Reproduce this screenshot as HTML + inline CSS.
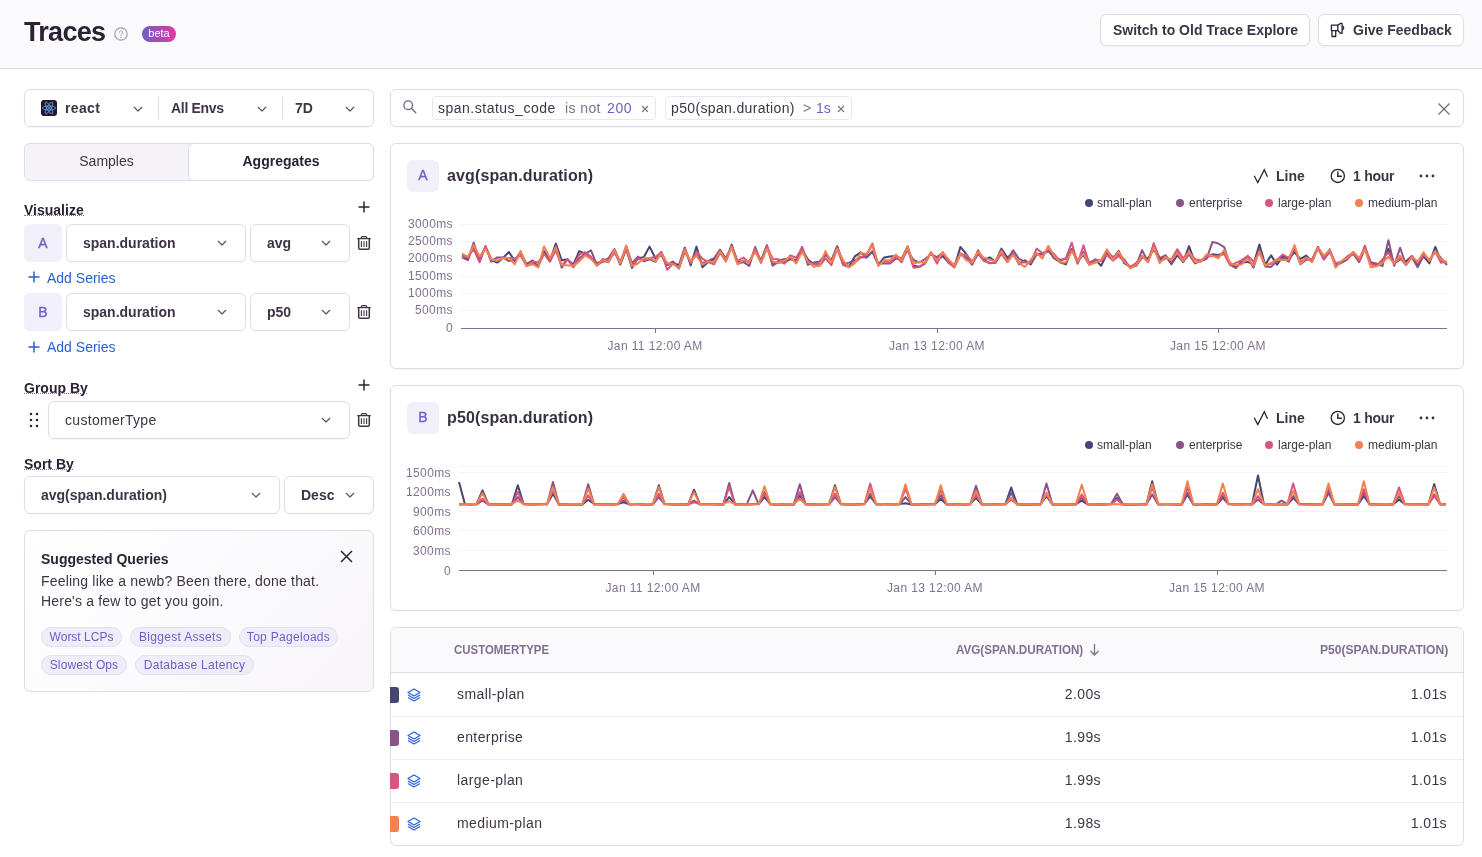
<!DOCTYPE html>
<html><head><meta charset="utf-8">
<style>
*{box-sizing:border-box;margin:0;padding:0}
html,body{width:1482px;height:857px;overflow:hidden;background:#fff;will-change:transform;font-family:"Liberation Sans",sans-serif;color:#3e3446}
.a{position:absolute}
.hdr{left:0;top:0;width:1482px;height:69px;background:#faf9fb;border-bottom:1px solid #e0dce5}
.box{position:absolute;background:#fff;border:1px solid #e0dce5;border-radius:6px;box-shadow:0 1px 2px rgba(43,34,51,0.04)}
.t{position:absolute;white-space:nowrap;line-height:1}
.b{font-weight:bold}
.chev{position:absolute;width:10px;height:6px}
.lbl{font-size:14px;font-weight:bold;color:#2b2233;}
.ul{position:absolute;height:1px;border-top:1px dotted #80708f}
.badge{position:absolute;background:#f1eff9;border-radius:6px;color:#6c5fc7;font-size:14px;text-align:center;-webkit-text-stroke:0.35px #6c5fc7}
.link{color:#2562d4;font-size:14px}
.chip{position:absolute;height:20px;border:1px solid #e4e0f2;background:#efedf8;border-radius:10px;color:#6c5fc7;font-size:12px;line-height:18px;padding:0;text-align:center;white-space:nowrap;letter-spacing:0.3px}
.ylab{position:absolute;font-size:12px;color:#80708f;text-align:right;width:60px;line-height:12px;letter-spacing:0.4px}
.xlab{position:absolute;font-size:12px;color:#80708f;text-align:center;width:120px;line-height:12px;letter-spacing:0.4px}
.leg{position:absolute;font-size:12px;color:#3e3446;line-height:12px;white-space:nowrap}
.dot{position:absolute;width:8px;height:8px;border-radius:4px}
.th{position:absolute;font-size:12px;font-weight:bold;color:#80708f;line-height:12px;white-space:nowrap}
.td{position:absolute;font-size:14px;color:#3e3446;line-height:14px;white-space:nowrap;letter-spacing:0.4px}
</style></head><body>
<div class="a hdr"></div>
<div class="t b" style="left:24px;top:19px;font-size:27px;color:#2b2233;letter-spacing:-0.7px">Traces</div>
<svg class="a" style="left:114px;top:27px" width="14" height="14" viewBox="0 0 14 14"><circle cx="7" cy="7" r="6.2" fill="none" stroke="#a399ad" stroke-width="1.2"/><path d="M5.2 5.5a1.8 1.8 0 1 1 2.6 1.6c-.5.3-.8.6-.8 1.2v.3" fill="none" stroke="#b0a6ba" stroke-width="1" stroke-linecap="round"/><circle cx="7" cy="10.3" r=".7" fill="#a399ad"/></svg>
<div class="a" style="left:142px;top:26px;width:34px;height:16px;border-radius:8px;background:linear-gradient(90deg,#6c5fc7,#e1399f);color:#fff;font-size:11px;line-height:14px;text-align:center">beta</div>

<div class="box" style="left:1100px;top:14px;width:210px;height:32px"></div>
<div class="t b" style="left:1113px;top:23px;font-size:14px;color:#3e3446">Switch to Old Trace Explore</div>
<div class="box" style="left:1318px;top:14px;width:146px;height:32px"></div>
<svg class="a" style="left:1330px;top:22px" width="16" height="16" viewBox="0 0 16 16"><g fill="none" stroke="#2b2233" stroke-width="1.3" stroke-linejoin="round"><path d="M1.4 3.2H7.8V8.6H1.4Z"/><path d="M7.8 3.2L10.6 1.4H12.1V11.3H10.6L7.8 8.6"/><path d="M12.1 3.8A2.1 2.1 0 0 1 12.1 7.9"/><path d="M2 8.6V14.5H5.7V8.6"/></g></svg>
<div class="t b" style="left:1353px;top:23px;font-size:14px;color:#3e3446">Give Feedback</div>

<!-- page filters -->
<div class="box" style="left:24px;top:89px;width:350px;height:38px"></div>
<div class="a" style="left:158px;top:97px;width:1px;height:22px;background:#e0dce5"></div>
<div class="a" style="left:282px;top:97px;width:1px;height:22px;background:#e0dce5"></div>
<div class="a" style="left:41px;top:100px;width:16px;height:16px;border-radius:3px;background:#1e1a2c"></div>
<svg class="a" style="left:41px;top:100px" width="16" height="16" viewBox="0 0 16 16"><g fill="none" stroke="#6fa8ee" stroke-width="0.8"><ellipse cx="8" cy="8" rx="6.7" ry="2.1"/><ellipse cx="8" cy="8" rx="6.7" ry="2.1" transform="rotate(60 8 8)"/><ellipse cx="8" cy="8" rx="6.7" ry="2.1" transform="rotate(120 8 8)"/></g><circle cx="8" cy="8" r="1" fill="#61a5f5"/></svg>
<div class="t b" style="left:65px;top:101px;font-size:14px;letter-spacing:0.35px">react</div>
<div class="t b" style="left:171px;top:101px;font-size:14px;letter-spacing:-0.3px">All Envs</div>
<div class="t b" style="left:295px;top:101px;font-size:14px">7D</div>
<svg class="a" style="left:133px;top:106px" width="10" height="6" viewBox="0 0 10 6"><path d="M1.2 1.3L5 5L8.8 1.3" fill="none" stroke="#5d5366" stroke-width="1.2" stroke-linecap="round" stroke-linejoin="round"/></svg><svg class="a" style="left:257px;top:106px" width="10" height="6" viewBox="0 0 10 6"><path d="M1.2 1.3L5 5L8.8 1.3" fill="none" stroke="#5d5366" stroke-width="1.2" stroke-linecap="round" stroke-linejoin="round"/></svg><svg class="a" style="left:345px;top:106px" width="10" height="6" viewBox="0 0 10 6"><path d="M1.2 1.3L5 5L8.8 1.3" fill="none" stroke="#5d5366" stroke-width="1.2" stroke-linecap="round" stroke-linejoin="round"/></svg>

<!-- segmented -->
<div class="a" style="left:24px;top:143px;width:350px;height:38px;border:1px solid #e0dce5;border-radius:6px;background:#f5f3f7"></div>
<div class="a" style="left:188px;top:143px;width:186px;height:38px;border:1px solid #e0dce5;border-radius:6px;background:#fff"></div>
<div class="t" style="left:24px;top:154px;width:165px;text-align:center;font-size:14px;color:#3e3446">Samples</div>
<div class="t b" style="left:188px;top:154px;width:186px;text-align:center;font-size:14px;color:#2b2233">Aggregates</div>

<!-- visualize -->
<div class="t lbl" style="left:24px;top:203px">Visualize</div><div class="ul" style="left:24px;top:215px;width:60px"></div>
<svg class="a" style="left:358px;top:201px" width="12" height="12" viewBox="0 0 12 12"><path d="M6 0.5V11.5M0.5 6H11.5" stroke="#2b2233" stroke-width="1.5"/></svg>
<div class="badge" style="left:24px;top:224px;width:38px;height:38px;line-height:38px">A</div>
<div class="box" style="left:66px;top:224px;width:180px;height:38px"></div>
<div class="t b" style="left:83px;top:236px;font-size:14px">span.duration</div>
<svg class="a" style="left:217px;top:240px" width="10" height="6" viewBox="0 0 10 6"><path d="M1.2 1.3L5 5L8.8 1.3" fill="none" stroke="#5d5366" stroke-width="1.2" stroke-linecap="round" stroke-linejoin="round"/></svg>
<div class="box" style="left:250px;top:224px;width:100px;height:38px"></div>
<div class="t b" style="left:267px;top:236px;font-size:14px">avg</div>
<svg class="a" style="left:321px;top:240px" width="10" height="6" viewBox="0 0 10 6"><path d="M1.2 1.3L5 5L8.8 1.3" fill="none" stroke="#5d5366" stroke-width="1.2" stroke-linecap="round" stroke-linejoin="round"/></svg>
<svg class="a" style="left:357px;top:236px" width="14" height="14" viewBox="0 0 14 14"><g fill="none" stroke="#3e3446" stroke-linejoin="round"><path d="M0.3 2.6H13.7" stroke-width="1.3"/><path d="M4.4 2.5V1.6Q4.4 0.7 5.3 0.7H8.7Q9.6 0.7 9.6 1.6V2.5" stroke-width="1.2"/><path d="M1.7 2.6V12.2Q1.9 13.2 2.9 13.2H11.1Q12.1 13.2 12.3 12.2V2.6" stroke-width="1.5"/><path d="M4.4 5.2V11M7 5.2V11M9.6 5.2V11" stroke-width="1.1"/></g></svg>
<svg class="a" style="left:28px;top:271px" width="12" height="12" viewBox="0 0 12 12"><path d="M6 0.5V11.5M0.5 6H11.5" stroke="#2562d4" stroke-width="1.5"/></svg>
<div class="t link" style="left:47px;top:271px">Add Series</div>

<div class="badge" style="left:24px;top:293px;width:38px;height:38px;line-height:38px">B</div>
<div class="box" style="left:66px;top:293px;width:180px;height:38px"></div>
<div class="t b" style="left:83px;top:305px;font-size:14px">span.duration</div>
<svg class="a" style="left:217px;top:309px" width="10" height="6" viewBox="0 0 10 6"><path d="M1.2 1.3L5 5L8.8 1.3" fill="none" stroke="#5d5366" stroke-width="1.2" stroke-linecap="round" stroke-linejoin="round"/></svg>
<div class="box" style="left:250px;top:293px;width:100px;height:38px"></div>
<div class="t b" style="left:267px;top:305px;font-size:14px">p50</div>
<svg class="a" style="left:321px;top:309px" width="10" height="6" viewBox="0 0 10 6"><path d="M1.2 1.3L5 5L8.8 1.3" fill="none" stroke="#5d5366" stroke-width="1.2" stroke-linecap="round" stroke-linejoin="round"/></svg>
<svg class="a" style="left:357px;top:305px" width="14" height="14" viewBox="0 0 14 14"><g fill="none" stroke="#3e3446" stroke-linejoin="round"><path d="M0.3 2.6H13.7" stroke-width="1.3"/><path d="M4.4 2.5V1.6Q4.4 0.7 5.3 0.7H8.7Q9.6 0.7 9.6 1.6V2.5" stroke-width="1.2"/><path d="M1.7 2.6V12.2Q1.9 13.2 2.9 13.2H11.1Q12.1 13.2 12.3 12.2V2.6" stroke-width="1.5"/><path d="M4.4 5.2V11M7 5.2V11M9.6 5.2V11" stroke-width="1.1"/></g></svg>
<svg class="a" style="left:28px;top:341px" width="12" height="12" viewBox="0 0 12 12"><path d="M6 0.5V11.5M0.5 6H11.5" stroke="#2562d4" stroke-width="1.5"/></svg>
<div class="t link" style="left:47px;top:340px">Add Series</div>

<!-- group by -->
<div class="t lbl" style="left:24px;top:381px">Group By</div><div class="ul" style="left:24px;top:393px;width:63px"></div>
<svg class="a" style="left:358px;top:379px" width="12" height="12" viewBox="0 0 12 12"><path d="M6 0.5V11.5M0.5 6H11.5" stroke="#2b2233" stroke-width="1.5"/></svg>
<svg class="a" style="left:29px;top:412px" width="10" height="16" viewBox="0 0 10 16"><g fill="#2b2233"><circle cx="2" cy="2" r="1.3"/><circle cx="8" cy="2" r="1.3"/><circle cx="2" cy="8" r="1.3"/><circle cx="8" cy="8" r="1.3"/><circle cx="2" cy="14" r="1.3"/><circle cx="8" cy="14" r="1.3"/></g></svg>
<div class="box" style="left:48px;top:401px;width:302px;height:38px"></div>
<div class="t" style="left:65px;top:413px;font-size:14px;letter-spacing:0.3px">customerType</div>
<svg class="a" style="left:321px;top:417px" width="10" height="6" viewBox="0 0 10 6"><path d="M1.2 1.3L5 5L8.8 1.3" fill="none" stroke="#5d5366" stroke-width="1.2" stroke-linecap="round" stroke-linejoin="round"/></svg>
<svg class="a" style="left:357px;top:413px" width="14" height="14" viewBox="0 0 14 14"><g fill="none" stroke="#3e3446" stroke-linejoin="round"><path d="M0.3 2.6H13.7" stroke-width="1.3"/><path d="M4.4 2.5V1.6Q4.4 0.7 5.3 0.7H8.7Q9.6 0.7 9.6 1.6V2.5" stroke-width="1.2"/><path d="M1.7 2.6V12.2Q1.9 13.2 2.9 13.2H11.1Q12.1 13.2 12.3 12.2V2.6" stroke-width="1.5"/><path d="M4.4 5.2V11M7 5.2V11M9.6 5.2V11" stroke-width="1.1"/></g></svg>

<!-- sort by -->
<div class="t lbl" style="left:24px;top:457px">Sort By</div><div class="ul" style="left:24px;top:469px;width:49px"></div>
<div class="box" style="left:24px;top:476px;width:256px;height:38px"></div>
<div class="t b" style="left:41px;top:488px;font-size:14px">avg(span.duration)</div>
<svg class="a" style="left:251px;top:492px" width="10" height="6" viewBox="0 0 10 6"><path d="M1.2 1.3L5 5L8.8 1.3" fill="none" stroke="#5d5366" stroke-width="1.2" stroke-linecap="round" stroke-linejoin="round"/></svg>
<div class="box" style="left:284px;top:476px;width:90px;height:38px"></div>
<div class="t b" style="left:301px;top:488px;font-size:14px">Desc</div>
<svg class="a" style="left:345px;top:492px" width="10" height="6" viewBox="0 0 10 6"><path d="M1.2 1.3L5 5L8.8 1.3" fill="none" stroke="#5d5366" stroke-width="1.2" stroke-linecap="round" stroke-linejoin="round"/></svg>

<!-- suggested -->
<div class="a" style="left:24px;top:530px;width:350px;height:162px;border:1px solid #e0dce5;border-radius:6px;background:linear-gradient(135deg,#fff 0%,#f7f5fa 100%)"></div>
<div class="t b" style="left:41px;top:552px;font-size:14px;color:#2b2233">Suggested Queries</div>
<svg class="a" style="left:340px;top:550px" width="13" height="13" viewBox="0 0 13 13"><path d="M1 1L12 12M12 1L1 12" stroke="#2b2233" stroke-width="1.5"/></svg>
<div class="t" style="left:41px;top:571px;font-size:14px;line-height:20px;color:#3e3446;letter-spacing:0.19px">Feeling like a newb? Been there, done that.<br>Here's a few to get you goin.</div>
<div class="chip" style="left:41px;top:627px;width:81px;letter-spacing:0">Worst LCPs</div>
<div class="chip" style="left:130px;top:627px;width:101px">Biggest Assets</div>
<div class="chip" style="left:239px;top:627px;width:99px">Top Pageloads</div>
<div class="chip" style="left:41px;top:655px;width:86px;letter-spacing:0.1px">Slowest Ops</div>
<div class="chip" style="left:135px;top:655px;width:119px">Database Latency</div>

<!-- search -->
<div class="box" style="left:390px;top:89px;width:1074px;height:38px"></div>
<svg class="a" style="left:403px;top:100px" width="14" height="14" viewBox="0 0 14 14"><circle cx="5.2" cy="5.2" r="4.3" fill="none" stroke="#71637f" stroke-width="1.3"/><path d="M8.3 8.3L12.8 12.8" stroke="#71637f" stroke-width="1.3" stroke-linecap="round"/></svg>
<div class="a" style="left:432px;top:96px;width:224px;height:24px;border:1px solid #eae6ee;border-radius:4px"></div>
<div class="t" style="left:438px;top:101px;font-size:14px;color:#3e3446;letter-spacing:0.5px">span.status_code</div>
<div class="t" style="left:565px;top:101px;font-size:14px;color:#80708f;letter-spacing:0.4px">is not</div>
<div class="t" style="left:607px;top:101px;font-size:14px;color:#6c5fc7;letter-spacing:0.6px">200</div>
<svg class="a" style="left:641px;top:105px" width="8" height="8" viewBox="0 0 8 8"><path d="M1 1L7 7M7 1L1 7" stroke="#80708f" stroke-width="1.2"/></svg>
<div class="a" style="left:665px;top:96px;width:187px;height:24px;border:1px solid #eae6ee;border-radius:4px"></div>
<div class="t" style="left:671px;top:101px;font-size:14px;color:#3e3446;letter-spacing:0.35px">p50(span.duration)</div>
<div class="t" style="left:803px;top:101px;font-size:14px;color:#80708f">&gt;</div>
<div class="t" style="left:816px;top:101px;font-size:14px;color:#6c5fc7">1s</div>
<svg class="a" style="left:837px;top:105px" width="8" height="8" viewBox="0 0 8 8"><path d="M1 1L7 7M7 1L1 7" stroke="#80708f" stroke-width="1.2"/></svg>
<svg class="a" style="left:1438px;top:103px" width="12" height="12" viewBox="0 0 12 12"><path d="M0.5 0.5L11.5 11.5M11.5 0.5L0.5 11.5" stroke="#71667d" stroke-width="1.2"/></svg>

<!-- chart A -->
<div class="box" style="left:390px;top:143px;width:1074px;height:226px"></div><div class="badge" style="left:407px;top:160px;width:32px;height:32px;line-height:30px;font-size:14px">A</div><div class="t b" style="left:447px;top:168px;font-size:16px;color:#3a3042;letter-spacing:0.12px">avg(span.duration)</div><svg class="a" style="left:1253px;top:168px" width="16" height="16" viewBox="0 0 16 16"><path d="M1.2 7.8L4.8 14.5L11.3 1.7L14.5 8.7" fill="none" stroke="#2b2233" stroke-width="1.3" stroke-linejoin="miter" stroke-linecap="butt"/></svg><div class="t b" style="left:1276px;top:169px;font-size:14px">Line</div><svg class="a" style="left:1330px;top:168px" width="16" height="16" viewBox="0 0 16 16"><circle cx="7.8" cy="7.9" r="6.6" fill="none" stroke="#2b2233" stroke-width="1.3"/><path d="M7.8 3.4v4.9h4" fill="none" stroke="#2b2233" stroke-width="1.4"/></svg><div class="t b" style="left:1353px;top:169px;font-size:14px;letter-spacing:-0.25px">1 hour</div><svg class="a" style="left:1419px;top:174px" width="16" height="4" viewBox="0 0 16 4"><circle cx="2" cy="2" r="1.4" fill="#3e3446"/><circle cx="8" cy="2" r="1.4" fill="#3e3446"/><circle cx="14" cy="2" r="1.4" fill="#3e3446"/></svg><div class="dot" style="left:1085px;top:199px;background:#444674"></div><div class="leg" style="left:1097px;top:197px">small-plan</div><div class="dot" style="left:1176px;top:199px;background:#895289"></div><div class="leg" style="left:1189px;top:197px">enterprise</div><div class="dot" style="left:1265px;top:199px;background:#d6567f"></div><div class="leg" style="left:1278px;top:197px">large-plan</div><div class="dot" style="left:1355px;top:199px;background:#f38150"></div><div class="leg" style="left:1368px;top:197px">medium-plan</div>
<svg class="a" style="left:0;top:0" width="1482" height="857">
<g stroke="#f5f3f7" stroke-width="1">
<line x1="461" x2="1447" y1="224.5" y2="224.5"/><line x1="461" x2="1447" y1="241.5" y2="241.5"/><line x1="461" x2="1447" y1="258.5" y2="258.5"/><line x1="461" x2="1447" y1="276.5" y2="276.5"/><line x1="461" x2="1447" y1="293.5" y2="293.5"/><line x1="461" x2="1447" y1="310.5" y2="310.5"/>
</g>
<line x1="461" x2="1447" y1="328.5" y2="328.5" stroke="#80708f" stroke-width="1"/>
<line x1="655.5" x2="655.5" y1="328" y2="333" stroke="#80708f"/><line x1="937.5" x2="937.5" y1="328" y2="333" stroke="#80708f"/><line x1="1218.5" x2="1218.5" y1="328" y2="333" stroke="#80708f"/>
<polyline points="462.0,255.7 467.9,258.9 473.7,246.1 479.6,258.1 485.5,247.3 491.3,260.0 497.2,262.6 503.0,257.9 508.9,252.0 514.8,260.9 520.6,252.4 526.5,264.2 532.4,260.5 538.2,266.8 544.1,251.3 549.9,260.6 555.8,243.5 561.7,260.3 567.5,259.5 573.4,264.5 579.3,251.1 585.1,253.6 591.0,258.1 596.9,263.3 602.7,261.0 608.6,262.0 614.4,250.7 620.3,264.7 626.2,248.9 632.0,267.9 637.9,258.3 643.8,257.2 649.6,246.6 655.5,258.5 661.3,254.9 667.2,265.1 673.1,262.9 678.9,265.2 684.8,247.6 690.7,265.4 696.5,246.6 702.4,267.2 708.2,262.1 714.1,259.1 720.0,252.1 725.8,261.3 731.7,244.6 737.6,262.3 743.4,261.0 749.3,261.3 755.2,251.3 761.0,260.3 766.9,245.7 772.7,264.6 778.6,262.6 784.5,262.3 790.3,259.1 796.2,261.1 802.1,249.7 807.9,259.5 813.8,264.2 819.6,264.2 825.5,254.4 831.4,261.3 837.2,246.7 843.1,262.7 849.0,266.4 854.8,256.4 860.7,252.4 866.6,257.5 872.4,251.5 878.3,264.9 884.1,257.5 890.0,256.4 895.9,256.1 901.7,258.9 907.6,246.4 913.5,265.7 919.3,266.8 925.2,263.3 931.0,252.5 936.9,260.4 942.8,256.0 948.6,262.5 954.5,266.5 960.4,246.9 966.2,253.9 972.1,263.8 978.0,253.9 983.8,259.8 989.7,257.3 995.5,261.7 1001.4,248.6 1007.3,257.6 1013.1,253.3 1019.0,264.1 1024.9,260.3 1030.7,264.5 1036.6,253.9 1042.4,254.2 1048.3,250.1 1054.2,258.3 1060.0,262.3 1065.9,264.4 1071.8,249.0 1077.6,260.4 1083.5,254.9 1089.4,264.7 1095.2,259.5 1101.1,265.7 1106.9,254.1 1112.8,258.7 1118.7,250.9 1124.5,263.5 1130.4,266.9 1136.3,265.7 1142.1,257.3 1148.0,258.4 1153.8,249.4 1159.7,259.6 1165.6,255.5 1171.4,264.2 1177.3,255.1 1183.2,262.1 1189.0,246.1 1194.9,262.4 1200.8,260.7 1206.6,257.3 1212.5,254.2 1218.3,255.1 1224.2,252.3 1230.1,262.9 1235.9,267.0 1241.8,262.4 1247.7,261.9 1253.5,264.4 1259.4,244.4 1265.2,264.7 1271.1,255.4 1277.0,264.8 1282.8,256.4 1288.7,258.7 1294.6,252.3 1300.4,258.9 1306.3,255.6 1312.1,261.7 1318.0,247.7 1323.9,259.2 1329.7,249.4 1335.6,265.9 1341.5,262.7 1347.3,259.4 1353.2,252.0 1359.1,261.1 1364.9,247.5 1370.8,263.6 1376.6,265.0 1382.5,262.0 1388.4,248.8 1394.2,263.7 1400.1,259.1 1406.0,261.4 1411.8,256.1 1417.7,265.7 1423.5,256.2 1429.4,263.4 1435.3,246.9 1441.1,261.4 1447.0,262.3" fill="none" stroke="#444674" stroke-width="2" stroke-linejoin="round"/>
<polyline points="462.0,257.4 467.9,260.1 473.7,242.6 479.6,260.9 485.5,246.2 491.3,261.8 497.2,257.4 503.0,257.4 508.9,261.1 514.8,260.1 520.6,252.0 526.5,265.4 532.4,264.1 538.2,265.0 544.1,253.4 549.9,261.7 555.8,246.3 561.7,267.8 567.5,259.0 573.4,267.3 579.3,258.2 585.1,253.9 591.0,250.3 596.9,265.1 602.7,261.7 608.6,258.2 614.4,249.0 620.3,262.5 626.2,245.8 632.0,263.4 637.9,256.6 643.8,261.3 649.6,259.4 655.5,261.7 661.3,251.8 667.2,264.6 673.1,261.5 678.9,268.7 684.8,251.8 690.7,261.2 696.5,255.1 702.4,263.2 708.2,260.9 714.1,258.2 720.0,249.5 725.8,258.5 731.7,247.4 737.6,263.7 743.4,262.1 749.3,265.9 755.2,246.9 761.0,262.7 766.9,245.2 772.7,265.8 778.6,260.9 784.5,258.9 790.3,258.2 796.2,260.6 802.1,246.9 807.9,264.9 813.8,262.4 819.6,261.5 825.5,254.6 831.4,260.1 837.2,246.1 843.1,264.4 849.0,262.6 854.8,260.4 860.7,257.0 866.6,257.2 872.4,251.3 878.3,263.7 884.1,263.3 890.0,263.4 895.9,258.6 901.7,259.1 907.6,250.4 913.5,260.0 919.3,262.5 925.2,259.0 931.0,254.1 936.9,257.1 942.8,252.8 948.6,260.9 954.5,265.4 960.4,253.3 966.2,257.5 972.1,264.8 978.0,250.3 983.8,259.8 989.7,263.3 995.5,262.5 1001.4,249.5 1007.3,260.1 1013.1,250.3 1019.0,258.8 1024.9,261.7 1030.7,263.3 1036.6,254.4 1042.4,254.5 1048.3,251.1 1054.2,257.4 1060.0,259.7 1065.9,259.0 1071.8,249.0 1077.6,263.1 1083.5,251.7 1089.4,262.8 1095.2,259.7 1101.1,260.7 1106.9,250.9 1112.8,257.2 1118.7,254.4 1124.5,259.8 1130.4,267.8 1136.3,265.0 1142.1,250.3 1148.0,261.9 1153.8,244.4 1159.7,258.1 1165.6,255.3 1171.4,263.5 1177.3,251.9 1183.2,262.0 1189.0,254.3 1194.9,263.4 1200.8,261.1 1206.6,258.9 1212.5,241.9 1218.3,243.5 1224.2,247.1 1230.1,264.7 1235.9,268.1 1241.8,260.7 1247.7,256.9 1253.5,267.7 1259.4,249.3 1265.2,266.4 1271.1,266.9 1277.0,261.1 1282.8,258.4 1288.7,261.7 1294.6,248.4 1300.4,264.1 1306.3,259.7 1312.1,259.4 1318.0,246.7 1323.9,259.3 1329.7,251.9 1335.6,264.6 1341.5,261.7 1347.3,258.4 1353.2,253.8 1359.1,262.2 1364.9,248.8 1370.8,262.1 1376.6,263.8 1382.5,266.1 1388.4,240.2 1394.2,265.9 1400.1,247.8 1406.0,265.0 1411.8,257.2 1417.7,267.2 1423.5,255.4 1429.4,260.3 1435.3,251.3 1441.1,258.2 1447.0,265.0" fill="none" stroke="#895289" stroke-width="2" stroke-linejoin="round"/>
<polyline points="462.0,256.8 467.9,256.5 473.7,249.2 479.6,262.3 485.5,246.3 491.3,259.1 497.2,261.0 503.0,257.4 508.9,257.9 514.8,258.5 520.6,255.6 526.5,265.9 532.4,261.4 538.2,262.4 544.1,253.7 549.9,261.5 555.8,250.6 561.7,265.4 567.5,259.5 573.4,266.0 579.3,254.7 585.1,252.2 591.0,256.9 596.9,265.7 602.7,259.0 608.6,261.0 614.4,252.9 620.3,262.0 626.2,249.0 632.0,265.9 637.9,258.9 643.8,260.3 649.6,258.0 655.5,257.1 661.3,252.4 667.2,269.7 673.1,263.6 678.9,267.5 684.8,248.6 690.7,263.3 696.5,251.7 702.4,258.7 708.2,262.1 714.1,264.2 720.0,252.9 725.8,258.3 731.7,246.1 737.6,261.0 743.4,257.5 749.3,263.1 755.2,248.4 761.0,261.9 766.9,246.4 772.7,258.9 778.6,259.2 784.5,263.6 790.3,255.4 796.2,257.7 802.1,247.9 807.9,263.1 813.8,263.9 819.6,265.8 825.5,258.3 831.4,265.2 837.2,248.6 843.1,265.0 849.0,267.1 854.8,262.4 860.7,257.4 866.6,254.9 872.4,243.5 878.3,265.2 884.1,260.7 890.0,262.6 895.9,256.5 901.7,262.2 907.6,248.2 913.5,267.8 919.3,267.1 925.2,262.5 931.0,252.2 936.9,263.6 942.8,252.1 948.6,263.0 954.5,267.4 960.4,254.5 966.2,254.7 972.1,261.6 978.0,252.7 983.8,261.0 989.7,262.8 995.5,263.0 1001.4,253.7 1007.3,262.3 1013.1,254.1 1019.0,262.2 1024.9,262.5 1030.7,262.6 1036.6,248.6 1042.4,253.3 1048.3,249.5 1054.2,254.1 1060.0,261.2 1065.9,258.1 1071.8,242.7 1077.6,263.8 1083.5,245.2 1089.4,264.5 1095.2,260.8 1101.1,261.0 1106.9,254.8 1112.8,260.6 1118.7,255.9 1124.5,262.0 1130.4,266.8 1136.3,262.7 1142.1,256.1 1148.0,262.3 1153.8,243.1 1159.7,262.0 1165.6,258.3 1171.4,259.4 1177.3,249.2 1183.2,258.3 1189.0,251.6 1194.9,259.3 1200.8,260.5 1206.6,256.7 1212.5,255.8 1218.3,255.9 1224.2,254.1 1230.1,265.3 1235.9,262.8 1241.8,260.2 1247.7,255.8 1253.5,261.6 1259.4,252.7 1265.2,265.5 1271.1,263.9 1277.0,259.8 1282.8,254.6 1288.7,257.8 1294.6,248.2 1300.4,262.3 1306.3,257.8 1312.1,259.7 1318.0,248.3 1323.9,259.4 1329.7,250.1 1335.6,263.3 1341.5,261.8 1347.3,256.4 1353.2,252.5 1359.1,260.5 1364.9,245.6 1370.8,264.2 1376.6,265.8 1382.5,259.3 1388.4,252.3 1394.2,264.0 1400.1,258.0 1406.0,265.0 1411.8,256.1 1417.7,262.1 1423.5,254.2 1429.4,260.3 1435.3,251.8 1441.1,262.7 1447.0,261.5" fill="none" stroke="#d6567f" stroke-width="2" stroke-linejoin="round"/>
<polyline points="462.0,253.5 467.9,257.1 473.7,245.1 479.6,256.5 485.5,248.9 491.3,259.4 497.2,260.6 503.0,258.1 508.9,257.9 514.8,264.4 520.6,251.0 526.5,266.0 532.4,264.0 538.2,267.4 544.1,246.3 549.9,258.1 555.8,247.4 561.7,265.0 567.5,265.3 573.4,266.1 579.3,261.3 585.1,255.2 591.0,258.9 596.9,265.6 602.7,260.1 608.6,262.3 614.4,249.8 620.3,263.6 626.2,245.7 632.0,266.0 637.9,263.6 643.8,258.3 649.6,257.9 655.5,261.1 661.3,253.7 667.2,263.0 673.1,264.3 678.9,268.3 684.8,250.0 690.7,261.4 696.5,255.5 702.4,264.6 708.2,261.3 714.1,262.6 720.0,251.1 725.8,261.6 731.7,247.2 737.6,264.3 743.4,260.3 749.3,261.6 755.2,251.7 761.0,263.1 766.9,248.6 772.7,261.6 778.6,262.9 784.5,260.3 790.3,256.8 796.2,263.5 802.1,251.7 807.9,261.1 813.8,266.9 819.6,265.5 825.5,251.1 831.4,262.5 837.2,248.5 843.1,260.3 849.0,267.4 854.8,263.1 860.7,252.9 866.6,254.0 872.4,245.4 878.3,266.1 884.1,260.3 890.0,260.3 895.9,254.7 901.7,260.2 907.6,246.4 913.5,263.8 919.3,261.8 925.2,262.8 931.0,252.6 936.9,260.5 942.8,252.4 948.6,259.4 954.5,265.8 960.4,253.5 966.2,260.2 972.1,262.8 978.0,251.8 983.8,257.8 989.7,259.9 995.5,261.1 1001.4,251.3 1007.3,261.8 1013.1,254.7 1019.0,263.2 1024.9,266.9 1030.7,259.8 1036.6,252.9 1042.4,258.5 1048.3,245.7 1054.2,256.0 1060.0,262.4 1065.9,262.4 1071.8,251.1 1077.6,260.8 1083.5,253.6 1089.4,264.7 1095.2,262.8 1101.1,260.0 1106.9,249.4 1112.8,259.6 1118.7,251.6 1124.5,261.7 1130.4,268.4 1136.3,265.0 1142.1,255.8 1148.0,261.9 1153.8,247.5 1159.7,263.1 1165.6,256.8 1171.4,260.1 1177.3,252.8 1183.2,261.3 1189.0,251.8 1194.9,261.9 1200.8,261.9 1206.6,254.4 1212.5,255.8 1218.3,258.2 1224.2,250.0 1230.1,263.2 1235.9,265.2 1241.8,264.3 1247.7,258.5 1253.5,265.6 1259.4,251.4 1265.2,265.4 1271.1,262.9 1277.0,259.4 1282.8,259.9 1288.7,259.7 1294.6,245.1 1300.4,264.4 1306.3,257.6 1312.1,262.2 1318.0,247.7 1323.9,255.7 1329.7,249.9 1335.6,267.6 1341.5,260.9 1347.3,258.4 1353.2,251.8 1359.1,258.0 1364.9,249.3 1370.8,267.2 1376.6,266.3 1382.5,262.6 1388.4,256.8 1394.2,263.6 1400.1,255.7 1406.0,264.8 1411.8,257.3 1417.7,261.8 1423.5,252.2 1429.4,261.0 1435.3,250.8 1441.1,259.5 1447.0,262.5" fill="none" stroke="#f38150" stroke-width="2" stroke-linejoin="round"/>
</svg>
<div class="ylab" style="left:393px;top:218px">3000ms</div>
<div class="ylab" style="left:393px;top:235px">2500ms</div>
<div class="ylab" style="left:393px;top:252px">2000ms</div>
<div class="ylab" style="left:393px;top:270px">1500ms</div>
<div class="ylab" style="left:393px;top:287px">1000ms</div>
<div class="ylab" style="left:393px;top:304px">500ms</div>
<div class="ylab" style="left:393px;top:322px">0</div>
<div class="xlab" style="left:595px;top:340px">Jan 11 12:00 AM</div>
<div class="xlab" style="left:877px;top:340px">Jan 13 12:00 AM</div>
<div class="xlab" style="left:1158px;top:340px">Jan 15 12:00 AM</div>

<!-- chart B -->
<div class="box" style="left:390px;top:385px;width:1074px;height:226px"></div><div class="badge" style="left:407px;top:402px;width:32px;height:32px;line-height:30px;font-size:14px">B</div><div class="t b" style="left:447px;top:410px;font-size:16px;color:#3a3042;letter-spacing:0.12px">p50(span.duration)</div><svg class="a" style="left:1253px;top:410px" width="16" height="16" viewBox="0 0 16 16"><path d="M1.2 7.8L4.8 14.5L11.3 1.7L14.5 8.7" fill="none" stroke="#2b2233" stroke-width="1.3" stroke-linejoin="miter" stroke-linecap="butt"/></svg><div class="t b" style="left:1276px;top:411px;font-size:14px">Line</div><svg class="a" style="left:1330px;top:410px" width="16" height="16" viewBox="0 0 16 16"><circle cx="7.8" cy="7.9" r="6.6" fill="none" stroke="#2b2233" stroke-width="1.3"/><path d="M7.8 3.4v4.9h4" fill="none" stroke="#2b2233" stroke-width="1.4"/></svg><div class="t b" style="left:1353px;top:411px;font-size:14px;letter-spacing:-0.25px">1 hour</div><svg class="a" style="left:1419px;top:416px" width="16" height="4" viewBox="0 0 16 4"><circle cx="2" cy="2" r="1.4" fill="#3e3446"/><circle cx="8" cy="2" r="1.4" fill="#3e3446"/><circle cx="14" cy="2" r="1.4" fill="#3e3446"/></svg><div class="dot" style="left:1085px;top:441px;background:#444674"></div><div class="leg" style="left:1097px;top:439px">small-plan</div><div class="dot" style="left:1176px;top:441px;background:#895289"></div><div class="leg" style="left:1189px;top:439px">enterprise</div><div class="dot" style="left:1265px;top:441px;background:#d6567f"></div><div class="leg" style="left:1278px;top:439px">large-plan</div><div class="dot" style="left:1355px;top:441px;background:#f38150"></div><div class="leg" style="left:1368px;top:439px">medium-plan</div>
<svg class="a" style="left:0;top:0" width="1482" height="857">
<g stroke="#f5f3f7" stroke-width="1">
<line x1="459" x2="1447" y1="466.5" y2="466.5"/><line x1="459" x2="1447" y1="472.5" y2="472.5"/><line x1="459" x2="1447" y1="491.5" y2="491.5"/><line x1="459" x2="1447" y1="511.5" y2="511.5"/><line x1="459" x2="1447" y1="530.5" y2="530.5"/><line x1="459" x2="1447" y1="550.5" y2="550.5"/>
</g>
<line x1="459" x2="1447" y1="570.5" y2="570.5" stroke="#80708f" stroke-width="1"/>
<line x1="653.5" x2="653.5" y1="570" y2="575" stroke="#80708f"/><line x1="935.5" x2="935.5" y1="570" y2="575" stroke="#80708f"/><line x1="1217.5" x2="1217.5" y1="570" y2="575" stroke="#80708f"/>
<polyline points="459.0,482.0 464.9,504.1 470.8,504.4 476.6,504.0 482.5,490.4 488.4,504.3 494.2,504.6 500.1,504.4 506.0,504.5 511.9,504.3 517.8,485.3 523.6,504.1 529.5,504.6 535.4,504.4 541.2,504.2 547.1,504.0 553.0,493.7 558.9,504.4 564.8,504.3 570.6,504.2 576.5,504.4 582.4,504.6 588.2,499.8 594.1,504.0 600.0,504.2 605.9,504.3 611.8,504.4 617.6,504.1 623.5,502.2 629.4,504.4 635.2,504.3 641.1,504.1 647.0,504.6 652.9,504.2 658.8,485.3 664.6,504.1 670.5,504.1 676.4,504.5 682.2,504.2 688.1,504.6 694.0,489.7 699.9,504.1 705.8,504.1 711.6,504.3 717.5,504.4 723.4,504.6 729.2,497.1 735.1,504.2 741.0,504.1 746.9,504.6 752.8,504.1 758.6,504.0 764.5,497.1 770.4,504.2 776.2,504.5 782.1,504.5 788.0,504.4 793.9,504.6 799.8,495.4 805.6,504.2 811.5,504.1 817.4,504.6 823.2,504.4 829.1,504.0 835.0,485.3 840.9,504.2 846.8,504.2 852.6,504.2 858.5,504.1 864.4,504.0 870.2,496.4 876.1,504.2 882.0,504.6 887.9,504.1 893.8,504.6 899.6,504.1 905.5,503.2 911.4,504.5 917.2,504.5 923.1,504.3 929.0,504.0 934.9,504.3 940.8,498.8 946.6,504.6 952.5,504.1 958.4,504.2 964.2,504.5 970.1,504.0 976.0,497.9 981.9,504.5 987.8,504.5 993.6,504.0 999.5,504.0 1005.4,504.0 1011.2,487.5 1017.1,504.2 1023.0,504.4 1028.9,504.5 1034.8,504.2 1040.6,504.2 1046.5,496.1 1052.4,504.4 1058.2,504.2 1064.1,504.4 1070.0,504.2 1075.9,504.2 1081.8,500.6 1087.6,504.5 1093.5,504.5 1099.4,504.4 1105.2,504.6 1111.1,504.0 1117.0,497.9 1122.9,504.3 1128.8,504.6 1134.6,504.6 1140.5,504.2 1146.4,504.2 1152.2,481.3 1158.1,504.3 1164.0,504.6 1169.9,504.1 1175.8,504.5 1181.6,504.4 1187.5,494.4 1193.4,504.5 1199.2,504.4 1205.1,504.2 1211.0,504.2 1216.9,504.2 1222.8,497.9 1228.6,504.0 1234.5,504.1 1240.4,504.5 1246.2,504.1 1252.1,504.0 1258.0,475.5 1263.9,504.3 1269.8,504.2 1275.6,504.6 1281.5,504.5 1287.4,504.6 1293.2,497.9 1299.1,504.1 1305.0,504.1 1310.9,504.3 1316.8,504.4 1322.6,504.3 1328.5,492.7 1334.4,504.3 1340.2,504.4 1346.1,504.4 1352.0,504.4 1357.9,504.5 1363.8,496.1 1369.6,504.1 1375.5,504.5 1381.4,504.2 1387.2,504.3 1393.1,504.2 1399.0,499.6 1404.9,504.1 1410.8,504.1 1416.6,504.1 1422.5,504.1 1428.4,504.5 1434.2,484.1 1440.1,504.2 1446.0,504.2" fill="none" stroke="#444674" stroke-width="2" stroke-linejoin="round"/>
<polyline points="459.0,504.6 464.9,504.3 470.8,504.1 476.6,504.5 482.5,500.5 488.4,504.6 494.2,504.1 500.1,504.3 506.0,504.5 511.9,504.5 517.8,497.1 523.6,504.0 529.5,504.2 535.4,504.1 541.2,504.1 547.1,504.6 553.0,481.9 558.9,504.6 564.8,504.2 570.6,504.5 576.5,504.3 582.4,504.2 588.2,484.3 594.1,504.6 600.0,504.1 605.9,504.4 611.8,504.4 617.6,504.1 623.5,500.5 629.4,504.1 635.2,504.1 641.1,504.2 647.0,504.4 652.9,504.4 658.8,497.1 664.6,504.0 670.5,504.2 676.4,504.4 682.2,504.1 688.1,504.2 694.0,500.5 699.9,504.5 705.8,504.3 711.6,504.0 717.5,504.1 723.4,504.2 729.2,482.9 735.1,504.4 741.0,504.1 746.9,504.1 752.8,490.4 758.6,504.2 764.5,492.1 770.4,504.2 776.2,504.6 782.1,504.2 788.0,504.3 793.9,504.2 799.8,484.3 805.6,504.5 811.5,504.6 817.4,504.2 823.2,504.1 829.1,504.4 835.0,497.1 840.9,504.0 846.8,504.5 852.6,504.3 858.5,504.5 864.4,504.2 870.2,493.7 876.1,504.3 882.0,504.1 887.9,504.0 893.8,504.3 899.6,504.4 905.5,497.1 911.4,504.1 917.2,504.4 923.1,504.2 929.0,504.3 934.9,504.1 940.8,495.4 946.6,504.3 952.5,504.6 958.4,504.1 964.2,504.3 970.1,504.5 976.0,485.8 981.9,504.1 987.8,504.1 993.6,504.6 999.5,504.6 1005.4,504.3 1011.2,492.7 1017.1,504.6 1023.0,504.2 1028.9,504.5 1034.8,504.4 1040.6,504.5 1046.5,483.4 1052.4,504.5 1058.2,504.1 1064.1,504.2 1070.0,504.5 1075.9,504.5 1081.8,497.9 1087.6,504.1 1093.5,504.2 1099.4,504.3 1105.2,504.2 1111.1,504.1 1117.0,493.7 1122.9,504.4 1128.8,504.5 1134.6,504.0 1140.5,504.3 1146.4,504.5 1152.2,494.4 1158.1,504.5 1164.0,504.1 1169.9,504.4 1175.8,504.3 1181.6,504.4 1187.5,492.7 1193.4,504.3 1199.2,504.3 1205.1,504.3 1211.0,504.4 1216.9,504.3 1222.8,496.1 1228.6,504.0 1234.5,504.4 1240.4,504.3 1246.2,504.1 1252.1,504.5 1258.0,499.6 1263.9,504.3 1269.8,504.1 1275.6,504.3 1281.5,500.6 1287.4,504.1 1293.2,496.1 1299.1,504.1 1305.0,504.3 1310.9,504.3 1316.8,504.0 1322.6,504.4 1328.5,491.0 1334.4,504.4 1340.2,504.5 1346.1,504.3 1352.0,504.0 1357.9,504.3 1363.8,492.7 1369.6,504.6 1375.5,504.1 1381.4,504.5 1387.2,504.6 1393.1,504.4 1399.0,496.1 1404.9,504.1 1410.8,504.6 1416.6,504.3 1422.5,504.6 1428.4,504.5 1434.2,494.4 1440.1,504.5 1446.0,504.6" fill="none" stroke="#895289" stroke-width="2" stroke-linejoin="round"/>
<polyline points="459.0,504.0 464.9,504.2 470.8,504.5 476.6,504.1 482.5,498.8 488.4,504.2 494.2,504.5 500.1,504.1 506.0,504.3 511.9,504.6 517.8,492.1 523.6,504.2 529.5,504.3 535.4,504.2 541.2,504.0 547.1,504.1 553.0,490.4 558.9,504.6 564.8,504.4 570.6,504.5 576.5,504.1 582.4,504.5 588.2,495.4 594.1,504.3 600.0,504.4 605.9,504.2 611.8,504.5 617.6,504.3 623.5,497.1 629.4,504.5 635.2,504.1 641.1,504.6 647.0,504.4 652.9,504.2 658.8,493.7 664.6,504.2 670.5,504.6 676.4,504.3 682.2,504.2 688.1,504.5 694.0,502.2 699.9,504.1 705.8,504.4 711.6,504.0 717.5,504.5 723.4,504.2 729.2,487.0 735.1,504.6 741.0,504.4 746.9,504.4 752.8,504.2 758.6,504.0 764.5,493.7 770.4,504.1 776.2,504.4 782.1,504.3 788.0,504.3 793.9,504.5 799.8,492.1 805.6,504.1 811.5,504.4 817.4,504.0 823.2,504.0 829.1,504.2 835.0,493.7 840.9,504.2 846.8,504.1 852.6,504.4 858.5,504.4 864.4,504.1 870.2,483.6 876.1,504.3 882.0,504.1 887.9,504.6 893.8,504.1 899.6,504.1 905.5,488.7 911.4,504.4 917.2,504.5 923.1,504.5 929.0,504.2 934.9,504.2 940.8,490.4 946.6,504.4 952.5,504.3 958.4,504.2 964.2,504.4 970.1,504.3 976.0,494.4 981.9,504.4 987.8,504.1 993.6,504.5 999.5,504.0 1005.4,504.3 1011.2,499.6 1017.1,504.1 1023.0,504.0 1028.9,504.5 1034.8,504.0 1040.6,504.3 1046.5,494.4 1052.4,504.1 1058.2,504.1 1064.1,504.4 1070.0,504.3 1075.9,504.4 1081.8,494.4 1087.6,504.1 1093.5,504.2 1099.4,504.2 1105.2,504.0 1111.1,504.5 1117.0,499.6 1122.9,504.4 1128.8,504.0 1134.6,504.5 1140.5,504.4 1146.4,504.3 1152.2,487.5 1158.1,504.3 1164.0,504.1 1169.9,504.1 1175.8,504.1 1181.6,504.0 1187.5,487.5 1193.4,504.4 1199.2,504.4 1205.1,504.5 1211.0,504.4 1216.9,504.2 1222.8,492.7 1228.6,504.3 1234.5,504.5 1240.4,504.3 1246.2,504.2 1252.1,504.4 1258.0,496.1 1263.9,504.1 1269.8,504.5 1275.6,504.0 1281.5,504.2 1287.4,504.1 1293.2,483.4 1299.1,504.6 1305.0,504.4 1310.9,504.2 1316.8,504.5 1322.6,504.2 1328.5,487.5 1334.4,504.5 1340.2,504.4 1346.1,504.4 1352.0,504.4 1357.9,504.6 1363.8,489.2 1369.6,504.5 1375.5,504.4 1381.4,504.5 1387.2,504.3 1393.1,504.4 1399.0,487.5 1404.9,504.2 1410.8,504.1 1416.6,504.4 1422.5,504.0 1428.4,504.5 1434.2,496.1 1440.1,504.0 1446.0,504.1" fill="none" stroke="#d6567f" stroke-width="2" stroke-linejoin="round"/>
<polyline points="459.0,504.6 464.9,504.2 470.8,504.1 476.6,504.0 482.5,493.1 488.4,504.4 494.2,504.4 500.1,504.4 506.0,504.4 511.9,504.0 517.8,500.5 523.6,504.2 529.5,504.5 535.4,504.5 541.2,504.5 547.1,504.0 553.0,487.0 558.9,504.5 564.8,504.6 570.6,504.1 576.5,504.1 582.4,504.1 588.2,488.7 594.1,504.5 600.0,504.5 605.9,504.4 611.8,504.5 617.6,504.4 623.5,493.7 629.4,504.1 635.2,504.1 641.1,504.5 647.0,504.1 652.9,504.2 658.8,487.0 664.6,504.0 670.5,504.2 676.4,504.2 682.2,504.4 688.1,504.2 694.0,492.1 699.9,504.6 705.8,504.3 711.6,504.5 717.5,504.4 723.4,504.0 729.2,501.2 735.1,504.3 741.0,504.5 746.9,504.2 752.8,504.4 758.6,504.3 764.5,486.3 770.4,504.5 776.2,504.1 782.1,504.5 788.0,504.1 793.9,504.0 799.8,498.8 805.6,504.5 811.5,504.6 817.4,504.0 823.2,504.3 829.1,504.3 835.0,487.0 840.9,504.1 846.8,504.3 852.6,504.2 858.5,504.5 864.4,504.2 870.2,488.7 876.1,504.2 882.0,504.1 887.9,504.4 893.8,504.3 899.6,504.1 905.5,484.3 911.4,504.0 917.2,504.5 923.1,504.4 929.0,504.5 934.9,504.4 940.8,485.3 946.6,504.2 952.5,504.2 958.4,504.5 964.2,504.1 970.1,504.5 976.0,491.0 981.9,504.1 987.8,504.2 993.6,504.5 999.5,504.3 1005.4,504.2 1011.2,497.9 1017.1,504.1 1023.0,504.3 1028.9,504.3 1034.8,504.5 1040.6,504.5 1046.5,492.7 1052.4,504.2 1058.2,504.2 1064.1,504.1 1070.0,504.5 1075.9,504.4 1081.8,484.8 1087.6,504.1 1093.5,504.3 1099.4,504.5 1105.2,504.3 1111.1,504.1 1117.0,504.3 1122.9,504.5 1128.8,504.1 1134.6,504.1 1140.5,504.2 1146.4,504.4 1152.2,484.1 1158.1,504.1 1164.0,504.1 1169.9,504.1 1175.8,504.2 1181.6,504.3 1187.5,481.3 1193.4,504.2 1199.2,504.1 1205.1,504.6 1211.0,504.4 1216.9,504.1 1222.8,483.4 1228.6,504.1 1234.5,504.2 1240.4,504.6 1246.2,504.5 1252.1,504.4 1258.0,489.2 1263.9,504.1 1269.8,504.4 1275.6,504.1 1281.5,504.1 1287.4,504.2 1293.2,491.0 1299.1,504.2 1305.0,504.5 1310.9,504.4 1316.8,504.3 1322.6,504.4 1328.5,483.4 1334.4,504.1 1340.2,504.4 1346.1,504.2 1352.0,504.4 1357.9,504.5 1363.8,481.3 1369.6,504.3 1375.5,504.4 1381.4,504.3 1387.2,504.1 1393.1,504.4 1399.0,492.7 1404.9,504.5 1410.8,504.4 1416.6,504.5 1422.5,504.4 1428.4,504.4 1434.2,487.5 1440.1,504.2 1446.0,504.4" fill="none" stroke="#f38150" stroke-width="2" stroke-linejoin="round"/>
</svg>
<div class="ylab" style="left:391px;top:467px">1500ms</div>
<div class="ylab" style="left:391px;top:486px">1200ms</div>
<div class="ylab" style="left:391px;top:506px">900ms</div>
<div class="ylab" style="left:391px;top:525px">600ms</div>
<div class="ylab" style="left:391px;top:545px">300ms</div>
<div class="ylab" style="left:391px;top:565px">0</div>
<div class="xlab" style="left:593px;top:582px">Jan 11 12:00 AM</div>
<div class="xlab" style="left:875px;top:582px">Jan 13 12:00 AM</div>
<div class="xlab" style="left:1157px;top:582px">Jan 15 12:00 AM</div>

<!-- table -->
<div class="a" style="left:390px;top:627px;width:1074px;height:219px;border:1px solid #e0dce5;border-radius:6px;overflow:hidden;background:#fff">
  <div class="a" style="left:0;top:0;width:1072px;height:45px;background:#faf9fb;border-bottom:1px solid #e0dce5"></div>
  <div class="a" style="left:0;top:88px;width:1072px;height:1px;background:#f0ecf3"></div>
  <div class="a" style="left:0;top:131px;width:1072px;height:1px;background:#f0ecf3"></div>
  <div class="a" style="left:0;top:174px;width:1072px;height:1px;background:#f0ecf3"></div>
</div>
<div class="th" style="left:454px;top:644px;font-size:12.5px;transform:scaleX(0.915);transform-origin:0 0">CUSTOMERTYPE</div>
<div class="th" style="left:956px;top:644px;font-size:12.5px;transform:scaleX(0.93);transform-origin:0 0">AVG(SPAN.DURATION)</div>
<svg class="a" style="left:1089px;top:643px" width="11" height="14" viewBox="0 0 11 14"><path d="M5.5 1v11M1.5 8l4 4 4-4" fill="none" stroke="#80708f" stroke-width="1.3"/></svg>
<div class="th" style="left:1320px;top:644px;font-size:12.5px;transform:scaleX(0.965);transform-origin:0 0">P50(SPAN.DURATION)</div>
<div class="a" style="left:390px;top:687px;width:9px;height:16px;background:#444674;border-radius:0 3px 3px 0"></div><svg class="a" style="left:407px;top:688px" width="14" height="14" viewBox="0 0 14 14"><g fill="none" stroke="#2a63d6" stroke-width="1.2" stroke-linejoin="round"><path d="M7 1L13 4.5L7 8L1 4.5Z"/><path d="M1 7L7 10.5L13 7"/><path d="M1 9.5L7 13L13 9.5"/></g></svg><div class="td" style="left:457px;top:687px">small-plan</div><div class="td" style="left:1000px;top:687px;width:101px;text-align:right">2.00s</div><div class="td" style="left:1346px;top:687px;width:101px;text-align:right">1.01s</div>
<div class="a" style="left:390px;top:730px;width:9px;height:16px;background:#895289;border-radius:0 3px 3px 0"></div><svg class="a" style="left:407px;top:731px" width="14" height="14" viewBox="0 0 14 14"><g fill="none" stroke="#2a63d6" stroke-width="1.2" stroke-linejoin="round"><path d="M7 1L13 4.5L7 8L1 4.5Z"/><path d="M1 7L7 10.5L13 7"/><path d="M1 9.5L7 13L13 9.5"/></g></svg><div class="td" style="left:457px;top:730px">enterprise</div><div class="td" style="left:1000px;top:730px;width:101px;text-align:right">1.99s</div><div class="td" style="left:1346px;top:730px;width:101px;text-align:right">1.01s</div>
<div class="a" style="left:390px;top:773px;width:9px;height:16px;background:#d6567f;border-radius:0 3px 3px 0"></div><svg class="a" style="left:407px;top:774px" width="14" height="14" viewBox="0 0 14 14"><g fill="none" stroke="#2a63d6" stroke-width="1.2" stroke-linejoin="round"><path d="M7 1L13 4.5L7 8L1 4.5Z"/><path d="M1 7L7 10.5L13 7"/><path d="M1 9.5L7 13L13 9.5"/></g></svg><div class="td" style="left:457px;top:773px">large-plan</div><div class="td" style="left:1000px;top:773px;width:101px;text-align:right">1.99s</div><div class="td" style="left:1346px;top:773px;width:101px;text-align:right">1.01s</div>
<div class="a" style="left:390px;top:816px;width:9px;height:16px;background:#f38150;border-radius:0 3px 3px 0"></div><svg class="a" style="left:407px;top:817px" width="14" height="14" viewBox="0 0 14 14"><g fill="none" stroke="#2a63d6" stroke-width="1.2" stroke-linejoin="round"><path d="M7 1L13 4.5L7 8L1 4.5Z"/><path d="M1 7L7 10.5L13 7"/><path d="M1 9.5L7 13L13 9.5"/></g></svg><div class="td" style="left:457px;top:816px">medium-plan</div><div class="td" style="left:1000px;top:816px;width:101px;text-align:right">1.98s</div><div class="td" style="left:1346px;top:816px;width:101px;text-align:right">1.01s</div>
</body></html>
